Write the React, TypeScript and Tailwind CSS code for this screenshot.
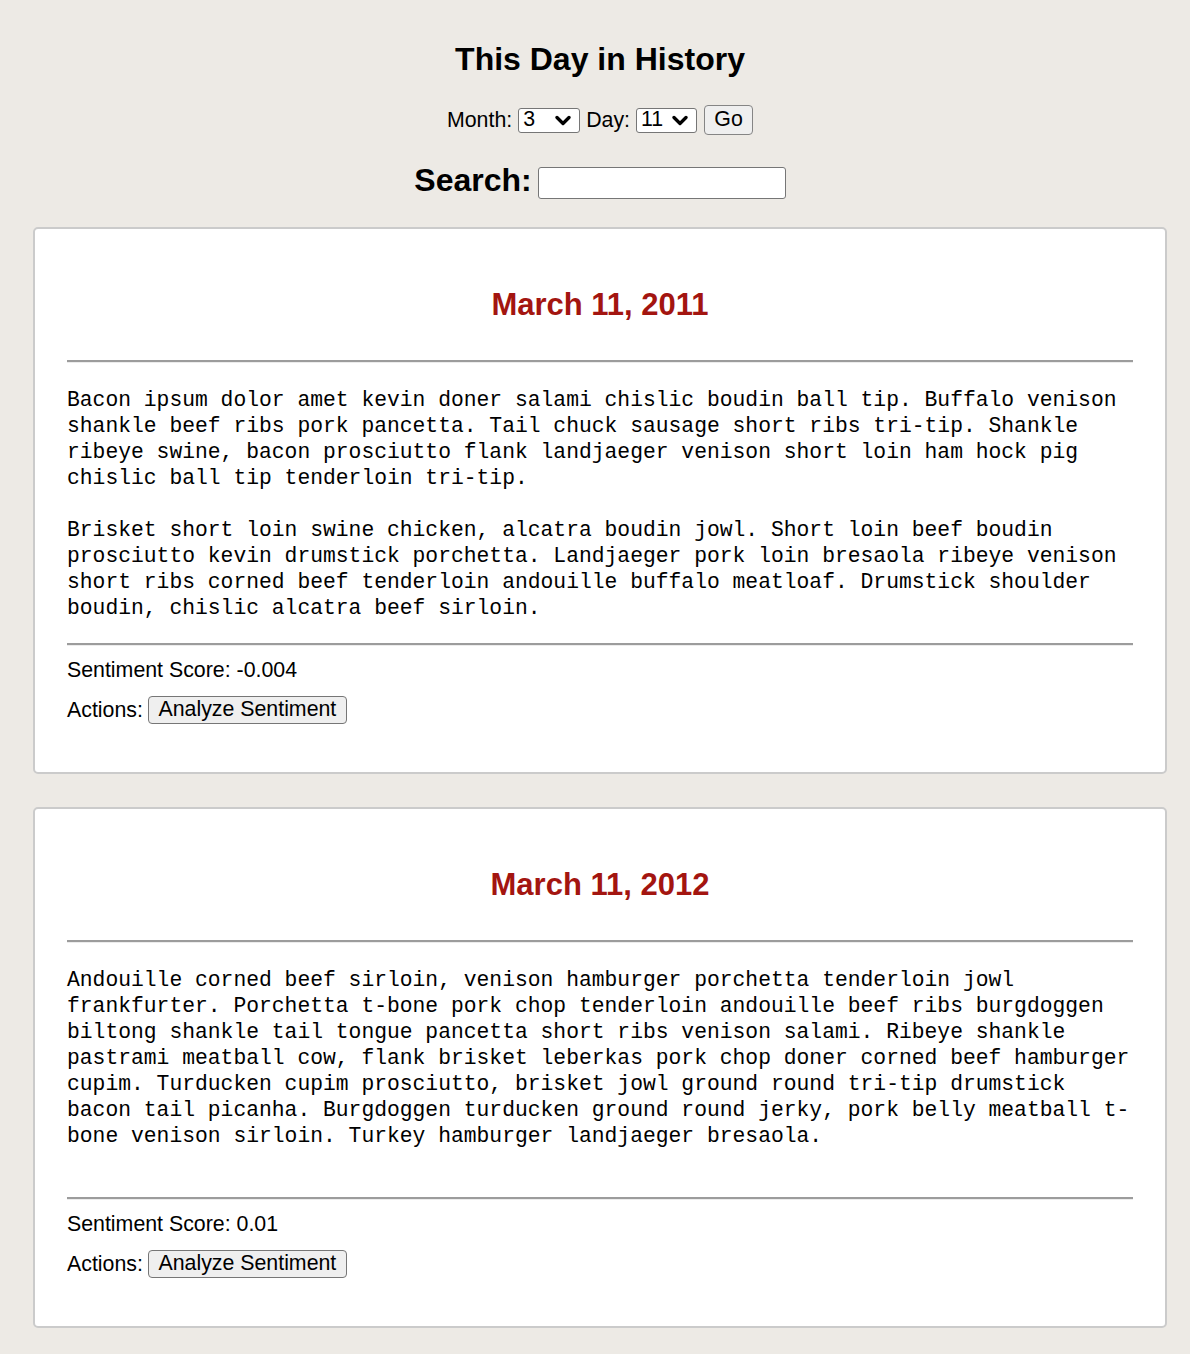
import React from "react";

const Chevron = () => (
  <svg width="16" height="11" viewBox="0 0 16 11" className="shrink-0">
    <path d="M2 2.5 L8 8.5 L14 2.5" fill="none" stroke="#000" strokeWidth="3.3" strokeLinecap="round" strokeLinejoin="round" />
  </svg>
);

const FakeSelect = ({ value, w }: { value: string; w: string }) => (
  <div className={`flex items-center justify-between h-[25px] ${w} bg-white border border-[#767676] rounded-[3px] pl-[4px] pr-[8px] text-[21.33px] leading-none`}>
    <span>{value}</span>
    <Chevron />
  </div>
);

const Rule = () => (
  <div className="h-[3px] border-t-2 border-t-[#9c9c9c] border-b border-b-[#ececec]" />
);

const Card = ({ date, text, score, extra }: { date: string; text: string; score: string; extra?: boolean }) => (
  <div className="bg-white border-2 border-[#cbcbcb] rounded-[5px] px-[32px] pt-[57px] pb-[48px]">
    <h2 className="text-center text-[31px] leading-[37px] font-bold text-[#a31510]">{date}</h2>
    <div className="mt-[37px]">
      <Rule />
    </div>
    <pre className={`mt-[24px] font-['Liberation_Mono',monospace] text-[21.33px] leading-[26px] whitespace-pre-wrap ${extra ? "pb-[26px]" : ""}`}>{text}</pre>
    <div className="mt-[22px]">
      <Rule />
    </div>
    <div className="mt-[12px] text-[21.33px] leading-[24px]">Sentiment Score: {score}</div>
    <div className="mt-[14px] flex items-center text-[21.33px] leading-[24px]">
      <span>Actions:</span>
      <button className="ml-[5px] h-[28px] w-[199px] bg-[#efefef] border border-[#767676] rounded-[4px] text-[21.33px] leading-none flex items-center justify-center">
        Analyze Sentiment
      </button>
    </div>
  </div>
);

const text1 = `Bacon ipsum dolor amet kevin doner salami chislic boudin ball tip. Buffalo venison shankle beef ribs pork pancetta. Tail chuck sausage short ribs tri-tip. Shankle ribeye swine, bacon prosciutto flank landjaeger venison short loin ham hock pig chislic ball tip tenderloin tri-tip.

Brisket short loin swine chicken, alcatra boudin jowl. Short loin beef boudin prosciutto kevin drumstick porchetta. Landjaeger pork loin bresaola ribeye venison short ribs corned beef tenderloin andouille buffalo meatloaf. Drumstick shoulder boudin, chislic alcatra beef sirloin.`;

const text2 = `Andouille corned beef sirloin, venison hamburger porchetta tenderloin jowl frankfurter. Porchetta t-bone pork chop tenderloin andouille beef ribs burgdoggen biltong shankle tail tongue pancetta short ribs venison salami. Ribeye shankle pastrami meatball cow, flank brisket leberkas pork chop doner corned beef hamburger cupim. Turducken cupim prosciutto, brisket jowl ground round tri-tip drumstick bacon tail picanha. Burgdoggen turducken ground round jerky, pork belly meatball t-bone venison sirloin. Turkey hamburger landjaeger bresaola.`;

export default function App() {
  return (
    <div className="min-h-[1354px] bg-[#edeae5] font-['Liberation_Sans',Arial,sans-serif] text-black overflow-hidden">
      <div className="ml-[33px] w-[1134px] pb-[24px]">
        <div className="flex flex-col items-center">
          <h1 className="mt-[41px] text-[32px] leading-[37px] font-bold">This Day in History</h1>
          <div className="mt-[27px] flex items-center h-[30px] text-[21.33px] leading-[24px]">
            <span>Month:</span>
            <div className="ml-[6px]"><FakeSelect value="3" w="w-[62px]" /></div>
            <span className="ml-[6px]">Day:</span>
            <div className="ml-[6px]"><FakeSelect value="11" w="w-[61px]" /></div>
            <button className="ml-[7px] h-[30px] w-[49px] bg-[#efefef] border border-[#858585] rounded-[4px] text-[21.33px] leading-none flex items-center justify-center">Go</button>
          </div>
          <div className="mt-[27px] flex items-center h-[37px]">
            <span className="text-[32px] leading-[37px] font-bold">Search:</span>
            <input className="ml-[6px] mt-[4px] h-[32px] w-[248px] bg-white border border-[#767676] rounded-[3px] outline-none" />
          </div>
        </div>
        <div className="mt-[28px] flex flex-col gap-[33px]">
          <Card date="March 11, 2011" text={text1} score="-0.004" />
          <Card date="March 11, 2012" text={text2} score="0.01" extra />
        </div>
      </div>
    </div>
  );
}
